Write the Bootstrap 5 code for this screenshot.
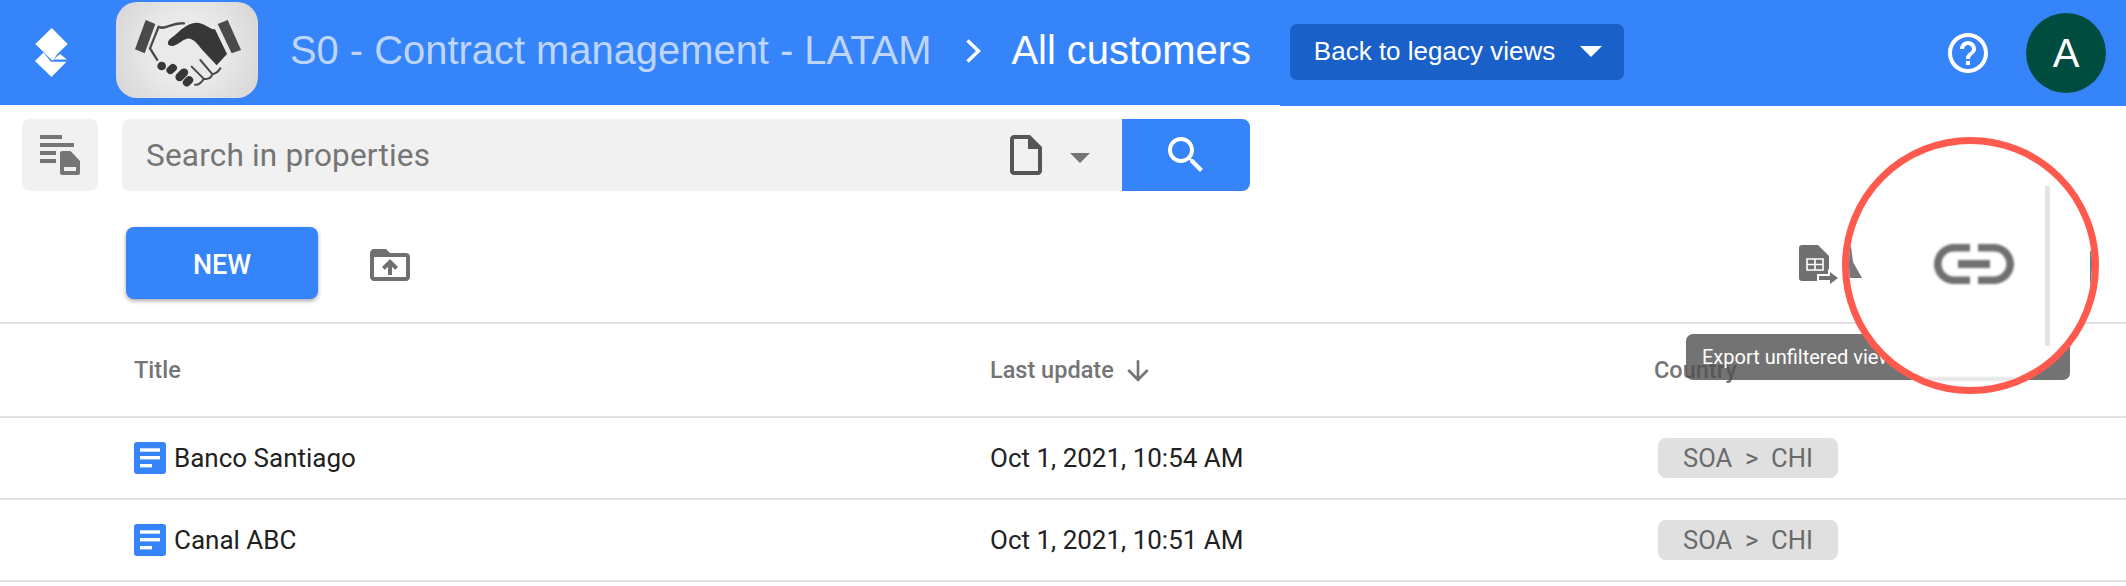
<!doctype html>
<html lang="en">
<head>
<meta charset="utf-8">
<title>All customers</title>
<link href="https://cdn.jsdelivr.net/npm/bootstrap@5.3.0/dist/css/bootstrap.min.css" rel="stylesheet">
<style>
html,body{height:586px;overflow:hidden;background:#fff;font-family:Roboto,"Liberation Sans",sans-serif;}
.app-head{height:105px;background:#3684f9;position:relative;font-family:"Liberation Sans",Arial,sans-serif;}
.app-head::after{content:"";position:absolute;left:1280px;right:0;top:105px;height:1px;background:#3684f9;}
.brand-mark{width:80px;height:70px;margin-left:20px;margin-right:16px;}
.logo-tile{width:142px;height:96px;margin-bottom:6px;border-radius:21px;background:radial-gradient(circle,#ebeaeb 40%,#d6d4d4 100%);overflow:hidden;}
.crumb-a{font-size:39.9px;color:#bed5fc;margin-left:32px;margin-bottom:4px;}
.crumb-sep{margin:0 30px 4px 35px;}
.crumb-b{font-size:39.9px;color:#fff;margin-bottom:4px;}
.legacy-btn{width:334px;height:56px;margin-left:39px;background:#1a60c9;color:#fff;border:0;border-radius:7px;font-size:26px;padding:0 22px 0 24px;margin-bottom:2px;}
.legacy-btn:hover{background:#1a60c9;color:#fff;}
.legacy-caret{width:0;height:0;border-left:11.5px solid transparent;border-right:11.5px solid transparent;border-top:11px solid #fff;}
.help-ico{margin-right:34px;}
.avatar-dot{width:80px;height:80px;border-radius:50%;background:#004d40;color:#fff;font-size:40px;margin-right:20px;}
.search-row{padding:14px 0 0 22px;}
.side-btn{width:76px;height:72px;background:#f1f1f1;border-radius:8px;}
.search-box{width:1128px;height:72px;margin-left:24px;background:#f1f1f1;border-radius:8px;overflow:hidden;}
.search-text{font-size:31.5px;color:#757575;padding:2px 0 0 24px;letter-spacing:.2px;}
.file-caret{width:0;height:0;border-left:10px solid transparent;border-right:10px solid transparent;border-top:10px solid #757575;margin:6px 32px 0 20px;}
.search-go{width:128px;height:72px;background:#3684f9;}
.action-row{height:72px;margin-top:36px;margin-bottom:23px;padding-left:126px;}
.new-btn{width:192px;height:72px;background:#3684f9;color:#fff;border:0;border-radius:8px;font-size:27px;font-weight:500;padding-top:10px;box-shadow:0 2px 4px rgba(0,0,0,.35);}
.new-btn:hover{background:#3684f9;color:#fff;}
.upload-ico{margin-left:48px;margin-top:4px;}
.export-ico{margin-right:256px;margin-top:3px;}
.grid-tbl{table-layout:fixed;width:2126px;margin:0;border-top:2px solid #e0e0e0;}
.grid-tbl th,.grid-tbl td{border-bottom:2px solid #e0e0e0;padding:0;vertical-align:middle;}
.grid-tbl th{height:94px;font-size:23.5px;font-weight:500;color:#757575;padding-top:2px;}
.grid-tbl td{height:82px;font-size:26px;color:#212121;}
.col-name{width:990px;padding-left:134px!important;}
.col-date{width:664px;}
.doc-ico{margin-right:8px;}
.sort-ico{margin-left:8px;}
.geo-chip{display:inline-flex;width:180px;height:40px;margin-left:4px;align-items:center;justify-content:center;background:#e0e0e0;border-radius:8px;font-size:25.6px;color:#6b6b6b;white-space:pre;}
.tip-box{position:absolute;left:1686px;top:334px;width:384px;height:46px;background:rgba(80,80,80,.8);border-radius:7px;color:#fff;font-size:20px;line-height:46px;padding-left:16px;}
.lens{position:absolute;left:1842px;top:137px;width:257px;height:257px;border:7px solid #ff5a4d;border-radius:50%;background:#fff;overflow:hidden;}
.lens-cursor{position:absolute;left:-2px;top:102px;filter:blur(.7px);}
.lens-link{position:absolute;left:77px;top:72px;filter:blur(1px);}
.lens-vline{position:absolute;left:196px;top:42px;width:5px;height:160px;background:#e4e4e4;filter:blur(.5px);}
.lens-hline{position:absolute;left:60px;top:233px;width:120px;height:4px;background:#e6e6e6;filter:blur(1px);}
.lens-edge{position:absolute;left:241px;top:107px;width:5px;height:40px;background:#757575;}
</style>
</head>
<body>
<header class="app-head d-flex align-items-center">
  <svg class="brand-mark flex-shrink-0" viewBox="0 0 80 70" aria-hidden="true">
    <polygon fill="#fff" points="31.7,10 47.7,26 37,36.5 33,42.5 31.7,42 15.3,26"/>
    <polygon fill="#fff" points="15,43 23.5,34.5 31,43.8 46.5,43.8 31.5,59"/>
    <polygon fill="#fff" points="33.5,41.5 40,36 47,41.5"/>
  </svg>
  <div class="logo-tile flex-shrink-0">
    <svg width="142" height="96" viewBox="3 6 426 288" aria-hidden="true">
      <polygon fill="#4a4a4a" points="92,60 121,72 89,160 60,148"/>
      <polygon fill="#4a4a4a" points="308,72 338,60 378,150 350,160"/>
      <path fill="none" stroke="#4a4a4a" stroke-width="7" stroke-linejoin="round" d="M131,80 L105,145 L128,182"/>
      <path fill="none" stroke="#4a4a4a" stroke-width="7" stroke-linecap="round" d="M131,80 C150,92 170,66 207,70"/>
      <path fill="#373737" d="M162,136 C153,126 165,115 178,107 C195,92 215,70 245,68 C265,68 285,88 300,88 L336,162 L305,196 L262,150 C245,128 232,112 215,116 C200,120 180,145 162,136Z"/>
      <circle cx="140" cy="198" r="13" fill="#373737"/>
      <rect x="153" y="195" width="34" height="24" rx="12" fill="#373737" transform="rotate(-42 170 207)"/>
      <rect x="178" y="212" width="44" height="25" rx="12.5" fill="#373737" transform="rotate(-45 200 224)"/>
      <rect x="202" y="232" width="34" height="24" rx="12" fill="#373737" transform="rotate(-45 219 244)"/>
      <path fill="none" stroke="#4a4a4a" stroke-width="6" stroke-linecap="round" d="M256,180 L290,220 M230,200 L266,236 Q256,255 240,254 M290,222 Q305,222 316,205 M266,236 Q285,240 292,224"/>
    </svg>
  </div>
  <span class="crumb-a text-nowrap">S0 - Contract management - LATAM</span>
  <svg class="crumb-sep flex-shrink-0" width="15" height="24" viewBox="0 0 15 24" aria-hidden="true"><path fill="none" stroke="#fff" stroke-width="3.5" d="M1.5,1.5 L12.5,12 L1.5,22.5"/></svg>
  <span class="crumb-b text-nowrap">All customers</span>
  <button class="btn legacy-btn d-flex align-items-center justify-content-between flex-shrink-0" type="button"><span>Back to legacy views</span><span class="legacy-caret"></span></button>
  <svg class="help-ico ms-auto flex-shrink-0" width="48" height="48" viewBox="0 0 24 24" aria-hidden="true"><path fill="#fff" d="M11 18h2v-2h-2v2zm1-16C6.48 2 2 6.48 2 12s4.48 10 10 10 10-4.48 10-10S17.52 2 12 2zm0 18c-4.41 0-8-3.59-8-8s3.59-8 8-8 8 3.59 8 8-3.59 8-8 8zm0-14c-2.21 0-4 1.79-4 4h2c0-1.1.9-2 2-2s2 .9 2 2c0 2-3 1.75-3 5h2c0-2.25 3-2.5 3-5 0-2.21-1.79-4-4-4z"/></svg>
  <div class="avatar-dot d-flex align-items-center justify-content-center flex-shrink-0">A</div>
</header>

<section class="search-row d-flex">
  <div class="side-btn d-flex align-items-center justify-content-center flex-shrink-0">
    <svg width="60" height="60" viewBox="0 0 60 60" aria-hidden="true">
      <g fill="#757575"><rect x="10" y="10" width="22" height="4"/><rect x="10" y="18" width="34" height="4"/><rect x="10" y="26" width="16" height="4"/><rect x="10" y="34" width="16" height="4"/>
      <path d="M32,26h8.5l9.5,10v12a2,2 0 0 1-2,2H32a2,2 0 0 1-2-2V28a2,2 0 0 1 2-2z"/></g>
      <rect x="34" y="42" width="12" height="4" fill="#f1f1f1"/>
    </svg>
  </div>
  <div class="search-box d-flex align-items-center flex-shrink-0">
    <span class="search-text flex-grow-1">Search in properties</span>
    <svg width="48" height="48" viewBox="0 0 24 24" aria-hidden="true"><path fill="#555" d="M14 2H6c-1.1 0-2 .9-2 2v16c0 1.1.89 2 1.99 2H18c1.1 0 2-.9 2-2V8l-6-6zM6 20V4h7v5h5v11H6z"/></svg>
    <span class="file-caret"></span>
    <span class="search-go d-flex align-items-center justify-content-center">
      <svg width="48" height="48" viewBox="0 0 24 24" aria-hidden="true"><path fill="#fff" d="M15.5 14h-.79l-.28-.27C15.41 12.59 16 11.11 16 9.5 16 5.91 13.09 3 9.5 3S3 5.91 3 9.5 5.91 16 9.5 16c1.61 0 3.09-.59 4.23-1.57l.27.28v.79l5 4.99L20.49 19l-4.99-5zm-6 0C7.01 14 5 11.99 5 9.5S7.01 5 9.5 5 14 7.01 14 9.5 11.99 14 9.5 14z"/></svg>
    </span>
  </div>
</section>

<section class="action-row d-flex align-items-center">
  <button class="btn new-btn flex-shrink-0" type="button">NEW</button>
  <svg class="upload-ico flex-shrink-0" width="48" height="48" viewBox="0 0 24 24" aria-hidden="true"><path fill="#707070" d="M20 6h-8l-2-2H4c-1.1 0-1.99.9-1.99 2L2 18c0 1.1.9 2 2 2h16c1.1 0 2-.9 2-2V8c0-1.1-.9-2-2-2zm0 12H4V8h16v10zM8 13.01l1.41 1.41L11 12.84V17h2v-4.16l1.59 1.59L16 13.01 12.01 9 8 13.01z"/></svg>
  <svg class="export-ico ms-auto flex-shrink-0" width="80" height="60" viewBox="0 0 80 60" aria-hidden="true">
    <path fill="#707070" d="M12,10h16l11,11v22a3,3 0 0 1-3,3H12a3,3 0 0 1-3-3V13a3,3 0 0 1 3-3z"/>
    <path fill="none" stroke="#fff" stroke-width="1.6" d="M17,24h16v11H17zM17,29.5h16M25,24v11"/>
    <path fill="#fff" d="M27,39h11v-5l12,9-12,9v-5H27z"/>
    <path fill="#707070" d="M29,41h11v-4l8,6-8,6v-4H29z"/>
  </svg>
</section>

<table class="table grid-tbl">
  <thead>
    <tr><th class="col-name">Title</th><th class="col-date"><span class="d-inline-flex align-items-center">Last update<svg class="sort-ico" width="32" height="32" viewBox="0 0 24 24" aria-hidden="true"><path fill="#757575" d="M20 12l-1.41-1.41L13 16.17V4h-2v12.17l-5.58-5.59L4 12l8 8 8-8z"/></svg></span></th><th>Country</th></tr>
  </thead>
  <tbody>
    <tr>
      <td class="col-name"><span class="d-flex align-items-center"><svg class="doc-ico flex-shrink-0" width="32" height="32" viewBox="0 0 32 32" aria-hidden="true"><rect width="32" height="32" rx="3" fill="#3684f9"/><g fill="#fff"><rect x="6" y="6.3" width="20" height="3.4"/><rect x="6" y="14" width="20" height="3.4"/><rect x="6" y="22" width="12" height="3.4"/></g></svg>Banco Santiago</span></td>
      <td>Oct 1, 2021, 10:54 AM</td>
      <td><span class="geo-chip">SOA  &gt;  CHI</span></td>
    </tr>
    <tr>
      <td class="col-name"><span class="d-flex align-items-center"><svg class="doc-ico flex-shrink-0" width="32" height="32" viewBox="0 0 32 32" aria-hidden="true"><rect width="32" height="32" rx="3" fill="#3684f9"/><g fill="#fff"><rect x="6" y="6.3" width="20" height="3.4"/><rect x="6" y="14" width="20" height="3.4"/><rect x="6" y="22" width="12" height="3.4"/></g></svg>Canal ABC</span></td>
      <td>Oct 1, 2021, 10:51 AM</td>
      <td><span class="geo-chip">SOA  &gt;  CHI</span></td>
    </tr>
  </tbody>
</table>

<div class="tip-box">Export unfiltered view</div>

<div class="lens">
  <svg class="lens-cursor" width="24" height="40" viewBox="0 0 24 40" aria-hidden="true"><polygon fill="#777" points="1,0 4,0 6,16 15,32 1,32"/></svg>
  <svg class="lens-link" width="96" height="96" viewBox="0 0 24 24" aria-hidden="true"><path fill="#707070" d="M3.9 12c0-1.71 1.39-3.1 3.1-3.1h4V7H7c-2.76 0-5 2.24-5 5s2.24 5 5 5h4v-1.9H7c-1.71 0-3.1-1.39-3.1-3.1zM8 13h8v-2H8v2zm9-6h-4v1.9h4c1.71 0 3.1 1.39 3.1 3.1s-1.39 3.1-3.1 3.1h-4V17h4c2.76 0 5-2.24 5-5s-2.24-5-5-5z"/></svg>
  <span class="lens-vline"></span>
  <span class="lens-hline"></span>
  <span class="lens-edge"></span>
</div>
<script src="https://cdn.jsdelivr.net/npm/bootstrap@5.3.0/dist/js/bootstrap.bundle.min.js"></script>
</body>
</html>
